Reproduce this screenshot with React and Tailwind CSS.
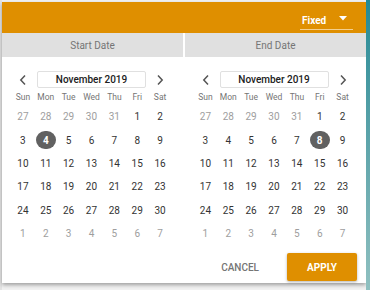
import React from "react";

const WEEK = ["Sun", "Mon", "Tue", "Wed", "Thu", "Fri", "Sat"];

function buildDays() {
  const days = [];
  [27, 28, 29, 30, 31].forEach((d) => days.push({ d, out: true }));
  for (let i = 1; i <= 30; i++) days.push({ d: i, out: false });
  for (let i = 1; i <= 7; i++) days.push({ d: i, out: true });
  return days;
}

function Chevron({ dir }) {
  return (
    <svg width="8" height="12" viewBox="0 0 8 12" fill="none">
      {dir === "left" ? (
        <polyline points="6,1.5 1.8,6 6,10.5" stroke="#555" strokeWidth="1.5" />
      ) : (
        <polyline points="2,1.5 6.2,6 2,10.5" stroke="#555" strokeWidth="1.5" />
      )}
    </svg>
  );
}

function Calendar({ selected, padLeft }) {
  const days = buildDays();
  return (
    <div className={`flex-1 pt-[14px] ${padLeft}`}>
      <div className="w-[160px]">
        <div className="flex items-center h-[17px]">
          <div className="w-[23px] flex justify-center items-center">
            <Chevron dir="left" />
          </div>
          <div className="flex-1 mx-[2.5px] h-[17px] border border-[#e0e0e0] rounded-[2px] flex items-center justify-center text-[10px] font-medium text-[#212121]">
            November 2019
          </div>
          <div className="w-[23px] flex justify-center items-center">
            <Chevron dir="right" />
          </div>
        </div>
        <div className="grid grid-cols-7 mt-[2px] h-[15px] items-center">
          {WEEK.map((w) => (
            <div key={w} className="text-center text-[8.5px] text-[#757575]">
              {w}
            </div>
          ))}
        </div>
        <div className="grid grid-cols-7">
          {days.map((x, i) => {
            const sel = !x.out && x.d === selected;
            return (
              <div key={i} className="h-[23.4px] flex items-center justify-center">
                {sel ? (
                  <div className="w-[20px] h-[18px] rounded-[9px] bg-[#616161] text-white font-bold text-[10px] flex items-center justify-center">
                    {x.d}
                  </div>
                ) : (
                  <span className={`text-[10px] ${x.out ? "text-[#9e9e9e]" : "text-[#333333]"}`}>
                    {x.d}
                  </span>
                )}
              </div>
            );
          })}
        </div>
      </div>
    </div>
  );
}

export default function App() {
  return (
    <div
      className="w-[370px] h-[290px] overflow-hidden bg-[#f2f2f2] flex"
      style={{ fontFamily: "Roboto, 'Noto Sans', sans-serif" }}
    >
      <div className="w-[2px] bg-[#e4e4e4]" />
      <div className="mt-[2px] w-[364px] h-[281px] bg-white flex flex-col shadow-[0_2px_4px_rgba(0,0,0,0.35)]">
        <div className="h-[31px] bg-[#df8f00] flex justify-end pr-[13px]">
          <div className="mt-[9px] w-[53px] h-[19px] border-b border-[#f3cf8f] flex items-center justify-between pl-[2px] pr-[6px]">
            <span className="text-white font-bold text-[10px]">Fixed</span>
            <svg width="8" height="5" viewBox="0 0 8 5" className="mb-[3px]">
              <polygon points="0,0 8,0 4,4.5" fill="#ffffff" />
            </svg>
          </div>
        </div>
        <div className="h-[24px] flex gap-[2px]">
          <div className="flex-1 bg-[#e0e0e0] flex items-center justify-center text-[10px] text-[#757575]">
            Start Date
          </div>
          <div className="flex-1 bg-[#e0e0e0] flex items-center justify-center text-[10px] text-[#757575]">
            End Date
          </div>
        </div>
        <div className="flex">
          <Calendar selected={4} padLeft="pl-[9.5px]" />
          <Calendar selected={8} padLeft="pl-[10.5px]" />
        </div>
        <div className="flex-1 flex items-end justify-end pr-[9px] pb-[2px]">
          <div className="h-[28px] flex items-center mr-[28px] text-[10px] font-medium text-[#757575]">
            CANCEL
          </div>
          <div className="w-[70px] h-[28px] bg-[#df8f00] rounded-[2px] flex items-center justify-center text-white font-bold text-[10px] shadow-[0_1px_3px_rgba(0,0,0,0.3)]">
            APPLY
          </div>
        </div>
      </div>
      <div className="flex-1 bg-gradient-to-b from-[#1f8a96] to-[#8fc0c0]" />
    </div>
  );
}
